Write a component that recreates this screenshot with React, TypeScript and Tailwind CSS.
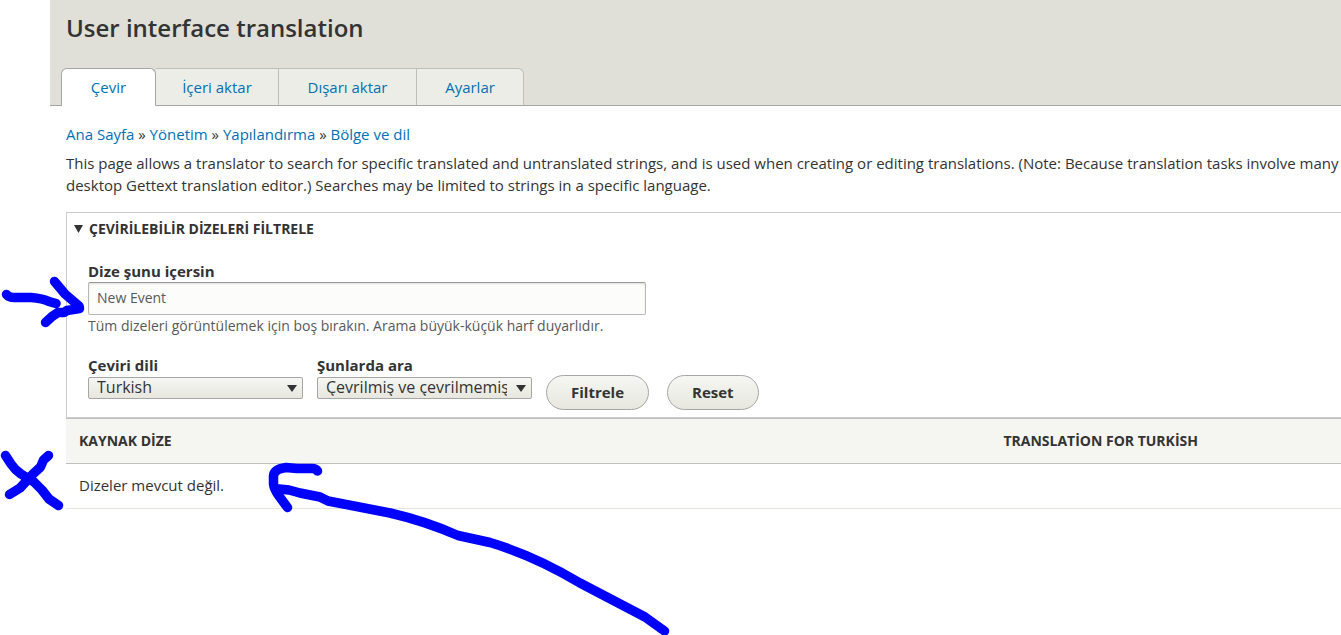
import React from "react";

const tabs = [
  { label: "Çevir", active: true, width: "w-[95px]" },
  { label: "İçeri aktar", active: false, width: "w-[123px]" },
  { label: "Dışarı aktar", active: false, width: "w-[138px]" },
  { label: "Ayarlar", active: false, width: "w-[107px]" },
];

const crumbs = ["Ana Sayfa", "Yönetim", "Yapılandırma", "Bölge ve dil"];

function Tab({ label, active, width }: { label: string; active: boolean; width: string }) {
  const look = active
    ? "-mb-px h-[38px] rounded-t-md border-x border-t border-[#a6a6a6] bg-white"
    : "h-[37px] border-t border-r border-[#bfbfba] bg-[#ecede7] last:rounded-tr-md";
  return (
    <li className={`${width} ${look}`}>
      <a href="#" className="flex h-9 items-center justify-center text-[#0071b3]">
        {label}
      </a>
    </li>
  );
}

function SelectField({ id, label, value }: { id: string; label: string; value: string }) {
  return (
    <div className="w-[215px]">
      <label htmlFor={id} className="block pb-[2px] text-[15px] leading-5 font-bold">
        {label}
      </label>
      <div className="relative">
        <select
          id={id}
          className="block h-[22px] w-full appearance-none rounded-xs border border-[#a6a6a6] bg-linear-to-b from-[#f6f6f3] to-[#e7e7df] pr-6 pb-[2px] pl-2 text-[16px] leading-[18px] text-[#333]"
        >
          <option>{value}</option>
        </select>
        <svg className="pointer-events-none absolute top-2 right-[6px]" width="10" height="7" viewBox="0 0 10 7">
          <path d="M0 0h10L5 7z" fill="#333" />
        </svg>
      </div>
    </div>
  );
}

function ActionButton({ children }: { children: React.ReactNode }) {
  return (
    <button
      type="button"
      className="h-[35px] rounded-full border border-[#a6a6a6] bg-linear-to-b from-[#f6f6f3] to-[#e7e7df] px-6 pb-[2px] text-[15px] font-bold text-[#333]"
    >
      {children}
    </button>
  );
}

function Annotations() {
  return (
    <svg
      className="pointer-events-none absolute top-0 left-0"
      width="680"
      height="635"
      viewBox="0 0 680 635"
      fill="none"
      stroke="#0000ff"
      strokeWidth="9.5"
      strokeLinecap="round"
      strokeLinejoin="round"
    >
      <path d="M6.500 294.500Q9 297.500 14 297.500L31 297.500Q43 298.500 49 301.500L56 303.500" />
      <path d="M54.500 281.500L60 288L65 294L72 300L79 306L79.500 308.500L67 310.500L64 312.500L58 312.500L52 316.500L45.500 322.500" />
      <path d="M5.500 455.500L11 464Q15 470 21 474L34 482L42 490L49 499L58.500 505.500" />
      <path d="M48.500 455.500L43.500 460L40.500 467L33 474L20 488L9.500 494.500" />
      <path d="M317.500 471Q316 468.500 312 468.500L297 468.500L286 467.500Q274 469 273.500 476L273.500 484Q274 489 279 496L287.500 507.500" />
      <path d="M279 489L289 490L300 493L320 497L328 501L390 513Q425 521 458 535.500L490 542.500Q535 556 580 583L645 617L664.500 631" />
    </svg>
  );
}

export default function App() {
  return (
    <div className="relative min-h-screen overflow-hidden bg-white pl-[50px] font-['Open_Sans','Noto_Sans',sans-serif] text-[15px] leading-[22px] text-[#333]">
      <header className="border-b border-[#a6a6a6] bg-[#e0dfd8]">
        <h1 className="px-4 pt-3 pb-6 text-[24px] leading-8 font-semibold">User interface translation</h1>
        <nav className="pl-[11px]">
          <ul className="flex items-start">
            {tabs.map((t) => (
              <Tab key={t.label} {...t} />
            ))}
          </ul>
        </nav>
      </header>

      <main className="pt-[17px] pl-4">
        <nav>
          <ol className="flex">
            {crumbs.map((c, i) => (
              <li key={c} className="whitespace-pre">
                {i > 0 && " » "}
                <a href="#" className="text-[#0071b3]">
                  {c}
                </a>
              </li>
            ))}
          </ol>
        </nav>
        <p className="mt-[7px] whitespace-nowrap">
          This page allows a translator to search for specific translated and untranslated strings, and is used when
          creating or editing translations. (Note: Because translation tasks involve many
          <br />
          desktop Gettext translation editor.) Searches may be limited to strings in a specific language.
        </p>

        <form className="mt-4 border-y border-l border-[#ccc] pb-[7px]">
          <details open>
            <summary className="flex h-8 items-center gap-[6px] pl-[7px] text-[14px] font-bold">
              <svg width="9" height="8" viewBox="0 0 9 8">
                <path d="M0 0h9L4.500 8z" fill="#333" />
              </svg>
              ÇEVİRİLEBİLİR DİZELERİ FİLTRELE
            </summary>
            <div className="pt-4 pl-[21px] text-[14px]">
              <label htmlFor="string" className="block pb-px text-[15px] leading-5 font-bold">
                Dize şunu içersin
              </label>
              <input
                id="string"
                type="text"
                defaultValue="New Event"
                className="block h-[33px] w-[558px] rounded-xs border border-[#b8b8b8] border-t-[#999] bg-[#fcfcfa] px-2 pb-[2px] text-[#595959] shadow-[inset_0_1px_2px_rgba(0,0,0,0.125)]"
              />
              <p className="text-[#595959]">
                Tüm dizeleri görüntülemek için boş bırakın. Arama büyük-küçük harf duyarlıdır.
              </p>
              <div className="mt-[18px] flex items-start">
                <div className="flex gap-[14px]">
                  <SelectField id="language" label="Çeviri dili" value="Turkish" />
                  <SelectField id="scope" label="Şunlarda ara" value="Çevrilmiş ve çevrilmemiş dizeler" />
                </div>
                <div className="flex gap-[18px] pt-5 pl-[14px]">
                  <ActionButton>Filtrele</ActionButton>
                  <ActionButton>Reset</ActionButton>
                </div>
              </div>
            </div>
          </details>
        </form>

        <table className="w-full table-fixed border-collapse text-left">
          <thead>
            <tr className="h-[45px] border-y border-[#bfbfba] bg-[#f5f5f2] text-[14px]">
              <th className="w-[72.5%] pl-[13px] font-bold">KAYNAK DİZE</th>
              <th className="pl-[13px] font-bold">TRANSLATİON FOR TURKİSH</th>
            </tr>
          </thead>
          <tbody>
            <tr className="h-[45px] border-b border-[#e6e4df]">
              <td colSpan={2} className="pb-[2px] pl-[13px]">
                Dizeler mevcut değil.
              </td>
            </tr>
          </tbody>
        </table>
      </main>
      <Annotations />
    </div>
  );
}
